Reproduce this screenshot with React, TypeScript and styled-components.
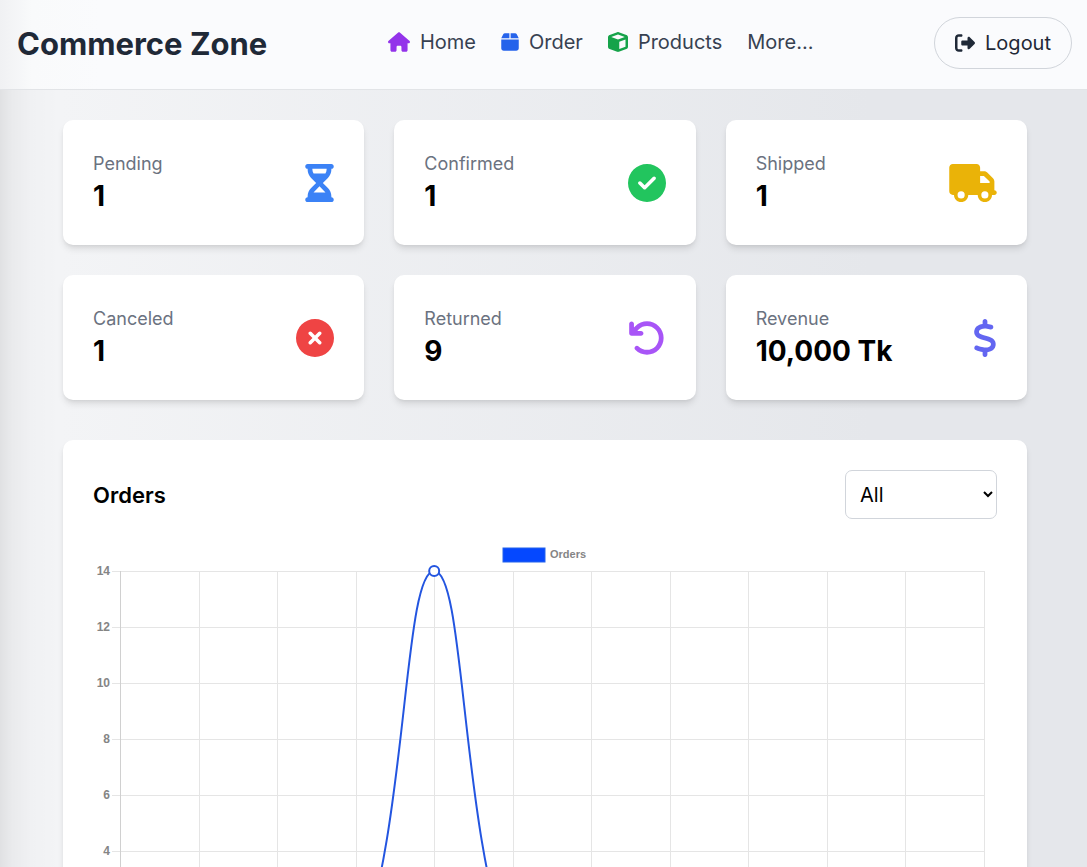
import React from "react";
import styled, { createGlobalStyle } from "styled-components";
import type { IconType } from "react-icons";
import {
  FaArrowRotateLeft,
  FaBox,
  FaCircleCheck,
  FaCircleXmark,
  FaCube,
  FaDollarSign,
  FaHourglassHalf,
  FaHouse,
  FaRightFromBracket,
  FaTruck,
} from "react-icons/fa6";

const GlobalStyle = createGlobalStyle`
  *, *::before, *::after { box-sizing: border-box; }
  html { scrollbar-width: none; }
  body { margin: 0; font-family: Inter, "Liberation Sans", sans-serif; color: #000; }
  h1, h2, p, ul { margin: 0; padding: 0; }
`;

const Page = styled.div`
  min-height: 100vh;
  background:
    linear-gradient(to right, rgba(0, 0, 0, 0.08) 0, rgba(0, 0, 0, 0.04) 12px, rgba(0, 0, 0, 0.01) 32px, transparent 60px),
    linear-gradient(to right, #f3f4f6 60px, #e5e7eb 80%);
`;

const Header = styled.header`
  display: flex;
  align-items: center;
  justify-content: space-between;
  padding: 17px 15px 20px 17px;
  border-bottom: 1px solid #e2e4e7;
  background: linear-gradient(to right, #f0f1f3 0, #f9fafb 32px, #fafbfd 100px);
`;

const Brand = styled.h1`
  padding-top: 2px;
  font-size: 31px;
  line-height: 40px;
  font-weight: 700;
  color: #1f2937;
`;

const NavList = styled.ul`
  display: flex;
  gap: 25px;
  padding-bottom: 3px;
  list-style: none;
`;

const NavLink = styled.a`
  display: flex;
  align-items: center;
  gap: 10px;
  font-size: 20px;
  line-height: 30px;
  color: #374151;
  text-decoration: none;
`;

const Glyph = styled.span<{ $color: string; $width: number; $height: number }>`
  display: flex;
  color: ${(p) => p.$color};

  & > svg {
    width: ${(p) => p.$width}px;
    height: ${(p) => p.$height}px;
  }
`;

const LogoutButton = styled.button`
  display: flex;
  align-items: center;
  gap: 10px;
  height: 52px;
  padding: 0 20px;
  border: 1px solid #d1d5db;
  border-radius: 26px;
  background: transparent;
  font: inherit;
  font-size: 20px;
  color: #1f2937;
`;

const Main = styled.main`
  display: grid;
  gap: 40px;
  padding: 30px 60px 40px 63px;
`;

const StatGrid = styled.section`
  display: grid;
  grid-template-columns: repeat(3, 1fr);
  gap: 30px;
`;

const Card = styled.article`
  padding: 30px;
  border-radius: 10px;
  background: #fff;
  box-shadow: 0 5px 7px -1px rgba(0, 0, 0, 0.1), 0 2px 4px -2px rgba(0, 0, 0, 0.1);
`;

const StatCard = styled(Card)`
  display: flex;
  align-items: center;
  justify-content: space-between;
`;

const StatLabel = styled.h2`
  font-size: 18px;
  line-height: 27px;
  font-weight: 400;
  color: #6b7280;
`;

const StatValue = styled.p`
  font-size: 28px;
  line-height: 38px;
  font-weight: 700;
`;

const ChartHeader = styled.div`
  display: flex;
  align-items: center;
  justify-content: space-between;
  margin-bottom: 20px;
`;

const ChartTitle = styled.h2`
  padding-top: 2px;
  font-size: 22px;
  line-height: 35px;
  font-weight: 600;
`;

const RangeSelect = styled.select`
  width: 152px;
  height: 49px;
  padding: 0 10px;
  border: 1px solid #d1d5db;
  border-radius: 7px;
  background: #fff;
  font: inherit;
  font-size: 20px;
  color: #000;
`;

const ChartSvg = styled.svg`
  display: block;
  width: 100%;
  height: auto;
`;

const ChartText = styled.text<{ $size?: number }>`
  font-family: "Liberation Sans", sans-serif;
  font-size: ${(p) => p.$size ?? 12}px;
  font-weight: 700;
  fill: #858585;
`;

type NavItem = { label: string; icon?: IconType; color?: string; width?: number };

const navItems: NavItem[] = [
  { label: "Home", icon: FaHouse, color: "#9333ea", width: 22 },
  { label: "Order", icon: FaBox, color: "#2563eb", width: 18 },
  { label: "Products", icon: FaCube, color: "#16a34a", width: 20 },
  { label: "More..." },
];

type Stat = { label: string; value: string; icon: IconType; color: string; width: number };

const stats: Stat[] = [
  { label: "Pending", value: "1", icon: FaHourglassHalf, color: "#3b82f6", width: 29 },
  { label: "Confirmed", value: "1", icon: FaCircleCheck, color: "#22c55e", width: 38 },
  { label: "Shipped", value: "1", icon: FaTruck, color: "#eab308", width: 48 },
  { label: "Canceled", value: "1", icon: FaCircleXmark, color: "#ef4444", width: 38 },
  { label: "Returned", value: "9", icon: FaArrowRotateLeft, color: "#a855f7", width: 38 },
  { label: "Revenue", value: "10,000 Tk", icon: FaDollarSign, color: "#6366f1", width: 24 },
];

const plot = { left: 27, right: 891, top: 32, bottom: 424, max: 14 };
const orders = [0, 0, 0, 0, 14, 0, 0, 0, 0, 0, 0, 0];
const tension = 0.4;

const xAt = (i: number) => plot.left + (i * (plot.right - plot.left)) / (orders.length - 1);
const yAt = (v: number) => plot.bottom - (v * (plot.bottom - plot.top)) / plot.max;

function smoothPath(values: number[]) {
  const pts = values.map((v, i) => ({ x: xAt(i), y: yAt(v) }));
  const clamp = (y: number) => Math.min(plot.bottom, Math.max(plot.top, y));
  const controls = pts.map((p, i) => {
    const prev = pts[i - 1] ?? p;
    const next = pts[i + 1] ?? p;
    const before = Math.hypot(p.x - prev.x, p.y - prev.y);
    const after = Math.hypot(next.x - p.x, next.y - p.y);
    const a = (tension * before) / (before + after);
    const b = (tension * after) / (before + after);
    return {
      inX: p.x - a * (next.x - prev.x),
      inY: clamp(p.y - a * (next.y - prev.y)),
      outX: p.x + b * (next.x - prev.x),
      outY: clamp(p.y + b * (next.y - prev.y)),
    };
  });
  return pts
    .map((p, i) =>
      i === 0
        ? `M${p.x} ${p.y}`
        : `C${controls[i - 1].outX} ${controls[i - 1].outY} ${controls[i].inX} ${controls[i].inY} ${p.x} ${p.y}`
    )
    .join("");
}

function OrdersChart() {
  const ticks = [0, 2, 4, 6, 8, 10, 12, 14];
  return (
    <ChartSvg viewBox="0 0 904 452" role="img" aria-label="Orders">
      {ticks.map((t) => {
        const y = Math.round(yAt(t)) + 0.5;
        return (
          <g key={t}>
            <line x1={plot.left - 8} x2={plot.right} y1={y} y2={y} stroke="#e5e5e5" />
            <ChartText x={17} y={y + 3} textAnchor="end">
              {t}
            </ChartText>
          </g>
        );
      })}
      {orders.map((_, i) => {
        const x = Math.round(xAt(i)) + 0.5;
        return (
          <line key={i} x1={x} x2={x} y1={plot.top} y2={plot.bottom + 8} stroke={i === 0 ? "#d0d0d0" : "#e5e5e5"} />
        );
      })}
      <path d={smoothPath(orders)} fill="none" stroke="#2355e0" strokeWidth={2} />
      {orders.map((v, i) => (
        <circle key={i} cx={xAt(i)} cy={yAt(v)} r={5} fill="#fff" stroke="#2355e0" strokeWidth={2} />
      ))}
      <rect x={410} y={9} width={42} height={14} fill="#0548ff" stroke="#2563eb" />
      <ChartText x={457} y={19} $size={11}>
        Orders
      </ChartText>
    </ChartSvg>
  );
}

export default function App() {
  return (
    <>
      <GlobalStyle />
      <Page>
        <Header>
          <Brand>Commerce Zone</Brand>
          <nav>
            <NavList>
              {navItems.map(({ label, icon: Icon, color = "currentColor", width = 20 }) => (
                <li key={label}>
                  <NavLink href="#">
                    {Icon && (
                      <Glyph $color={color} $width={width} $height={20}>
                        <Icon />
                      </Glyph>
                    )}
                    {label}
                  </NavLink>
                </li>
              ))}
            </NavList>
          </nav>
          <LogoutButton type="button">
            <FaRightFromBracket />
            Logout
          </LogoutButton>
        </Header>
        <Main>
          <StatGrid>
            {stats.map(({ label, value, icon: Icon, color, width }) => (
              <StatCard key={label}>
                <div>
                  <StatLabel>{label}</StatLabel>
                  <StatValue>{value}</StatValue>
                </div>
                <Glyph $color={color} $width={width} $height={38}>
                  <Icon />
                </Glyph>
              </StatCard>
            ))}
          </StatGrid>
          <Card>
            <ChartHeader>
              <ChartTitle>Orders</ChartTitle>
              <RangeSelect aria-label="Order range" defaultValue="all">
                <option value="all">All</option>
              </RangeSelect>
            </ChartHeader>
            <OrdersChart />
          </Card>
        </Main>
      </Page>
    </>
  );
}
